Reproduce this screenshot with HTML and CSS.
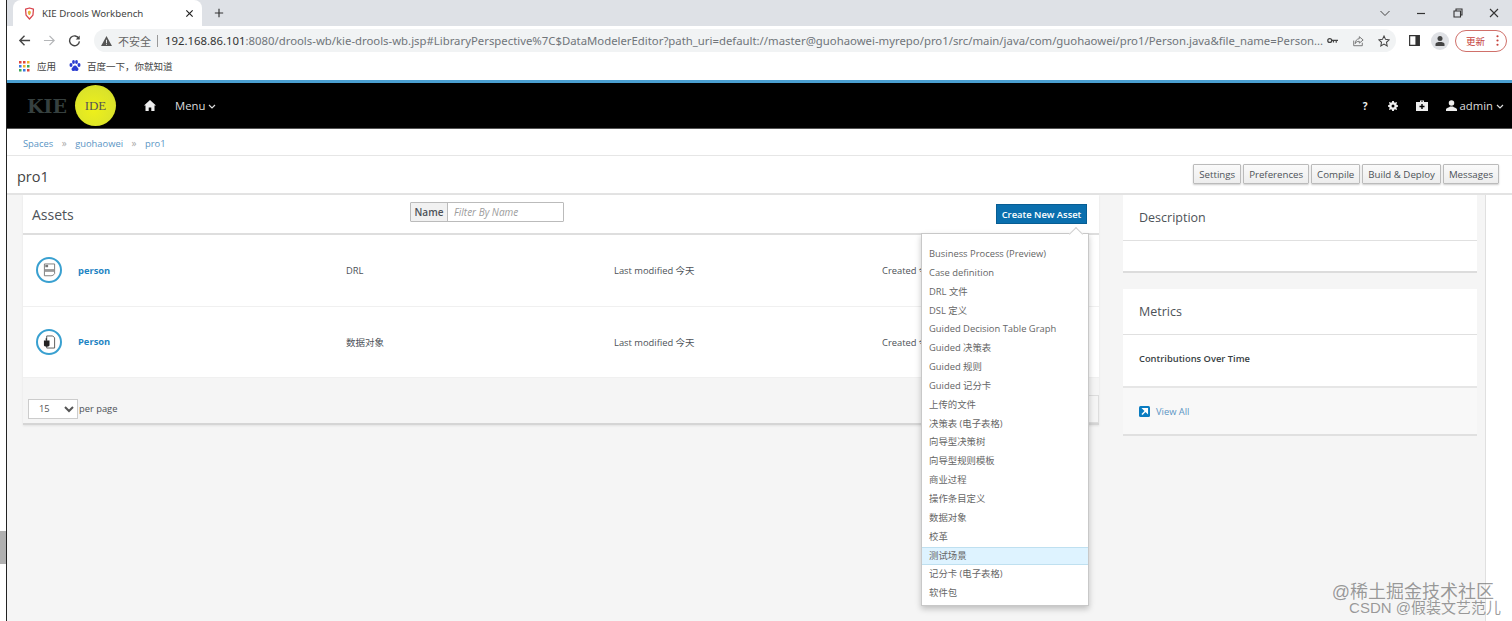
FILE: index.html
```html
<!DOCTYPE html>
<html lang="zh">
<head>
<meta charset="utf-8">
<title>KIE Drools Workbench</title>
<link rel="stylesheet" href="styles.css">
</head>
<body>
<div class="gutter"><div class="gutter-block"></div></div>
<div class="window">
  <div class="tabstrip">
    <div class="tab">
      <svg class="favicon" viewBox="0 0 14 16"><path d="M2 2.500 7 1l5 1.500-.6 7.500L7 15 2.600 10z" fill="#fff" stroke="#d8424a" stroke-width="1.600" stroke-linejoin="round"/><path d="M5.200 5.200c1.400-1.400 3.600-.6 3.600 1.400 0 1.400-1.200 2-1.200 3.400H6c0-1.200-.8-1.800-1.200-2.600z" fill="#e7b53c"/></svg>
      <span class="tab-title">KIE Drools Workbench</span>
      <svg class="tab-close" viewBox="0 0 10 10"><path d="M1.500 1.500l7 7M8.500 1.500l-7 7" stroke="#222" stroke-width="1.300"/></svg>
    </div>
    <svg class="newtab" viewBox="0 0 12 12"><path d="M6 1v10M1 6h10" stroke="#333" stroke-width="1.400"/></svg>
    <div class="winctl">
      <svg class="wc" viewBox="0 0 12 12"><path d="M1.500 4 6 8.500 10.500 4" fill="none" stroke="#444" stroke-width="1"/></svg>
      <svg class="wc" viewBox="0 0 12 12"><path d="M2 6.500h8" stroke="#333" stroke-width="1.200"/></svg>
      <svg class="wc" viewBox="0 0 12 12"><path d="M2 4h6.500v6H2zM4 4V2h6v6H8.500" fill="none" stroke="#333" stroke-width="1.100"/></svg>
      <svg class="wc" viewBox="0 0 12 12"><path d="M2 2l8 8M10 2l-8 8" stroke="#333" stroke-width="1.100"/></svg>
    </div>
  </div>
  <div class="toolbar">
    <svg class="nav-ic" viewBox="0 0 14 14"><path d="M13 7H2M7 2 2 7l5 5" fill="none" stroke="#444" stroke-width="1.500"/></svg>
    <svg class="nav-ic" viewBox="0 0 14 14"><path d="M1 7h11M7 2l5 5-5 5" fill="none" stroke="#b4b6b8" stroke-width="1.300"/></svg>
    <svg class="nav-ic" viewBox="0 0 14 14"><path d="M11.800 5A5.300 5.300 0 1 0 12.300 8" fill="none" stroke="#444" stroke-width="1.500"/><path d="M12.600 1.500v4.300H8.300z" fill="#444"/></svg>
    <div class="omnibox">
      <svg class="warn" viewBox="0 0 12 11"><path d="M6 0 12 11H0z" fill="#555"/><path d="M5.500 4h1v3.800h-1zM5.500 8.500h1v1h-1z" fill="#f1f3f4"/></svg>
      <span class="insecure">不安全</span>
      <span class="url"><b class="host">192.168.86.101</b>:8080/drools-wb/kie-drools-wb.jsp#LibraryPerspective%7C$DataModelerEditor?path_uri=default://master@guohaowei-myrepo/pro1/src/main/java/com/guohaowei/pro1/Person.java&amp;file_name=Person...</span>
      <svg class="omni-ic key" viewBox="0 0 14 8"><circle cx="3.500" cy="4" r="2.500" fill="none" stroke="#444" stroke-width="1.600"/><path d="M6 3h8v1.600h-1.500V7h-1.500V4.600H9V6.500H7.500V4.600H6z" fill="#444"/></svg>
      <svg class="omni-ic share" viewBox="0 0 14 14"><path d="M2 6.500V12.500H12V9" fill="none" stroke="#666" stroke-width="1"/><path d="M8.500 2 13 5.800 8.500 9.500V7.300C6 7.300 4.500 8.500 3.800 10 3.800 6.800 5.500 4.600 8.500 4.300z" fill="none" stroke="#666" stroke-width="1"/></svg>
      <svg class="omni-ic star" viewBox="0 0 14 14"><path d="M7 1.200 8.800 5.100l4.200.5-3.100 2.900.8 4.200L7 10.600 3.300 12.700l.8-4.200L1 5.600l4.200-.5z" fill="none" stroke="#444" stroke-width="1.200"/></svg>
    </div>
    <svg class="panel-ic" viewBox="0 0 12 12"><path d="M.7.700h10.600v10.600H.7z" fill="#fff" stroke="#333" stroke-width="1.300"/><path d="M7 1h4v10H7z" fill="#333"/></svg>
    <div class="avatar"><svg viewBox="0 0 12 12"><circle cx="6" cy="3.500" r="2.500" fill="#444"/><path d="M1.500 11V9C1.500 7.500 4 7 6 7s4.500.5 4.500 2v2z" fill="#444"/></svg></div>
    <div class="update"><span>更新</span><svg viewBox="0 0 3 13"><circle cx="1.500" cy="1.500" r="1.300" fill="#c5403a"/><circle cx="1.500" cy="6.500" r="1.300" fill="#c5403a"/><circle cx="1.500" cy="11.500" r="1.300" fill="#c5403a"/></svg></div>
  </div>
  <div class="bookmarks">
    <svg class="apps" viewBox="0 0 11 11">
      <rect x="0" y="0" width="2.500" height="2.500" fill="#e0463a"/><rect x="4" y="0" width="2.500" height="2.500" fill="#e0463a"/><rect x="8" y="0" width="2.500" height="2.500" fill="#f0b429"/>
      <rect x="0" y="4" width="2.500" height="2.500" fill="#3a78e0"/><rect x="4" y="4" width="2.500" height="2.500" fill="#f0b429"/><rect x="8" y="4" width="2.500" height="2.500" fill="#3ea85a"/>
      <rect x="0" y="8" width="2.500" height="2.500" fill="#3ea85a"/><rect x="4" y="8" width="2.500" height="2.500" fill="#3a78e0"/><rect x="8" y="8" width="2.500" height="2.500" fill="#e0463a"/>
    </svg>
    <span class="bm-text apps-label">应用</span>
    <svg class="paw" viewBox="0 0 12 12"><g fill="#2b3dd0"><ellipse cx="2" cy="5" rx="1.500" ry="1.900"/><ellipse cx="4.500" cy="2" rx="1.400" ry="1.900"/><ellipse cx="7.500" cy="2" rx="1.400" ry="1.900"/><ellipse cx="10" cy="5" rx="1.500" ry="1.900"/><path d="M6 5.500c1.700 0 2 1.500 3 2.500s.5 3.200-1.500 3c-1-.1-2-.4-3 0-2 .2-2.500-2-1.500-3s1.300-2.500 3-2.500z"/></g></svg>
    <span class="bm-text">百度一下，你就知道</span>
  </div>
  <div class="page">
    <header class="navbar">
      <span class="kie">KIE</span>
      <span class="ide">IDE</span>
      <svg class="home" viewBox="0 0 12 11"><path d="M6 0 0 5.500h1.500V11h3.200V7.500h2.600V11h3.200V5.500H12z" fill="#eee"/></svg>
      <span class="menu">Menu</span>
      <svg class="chev" viewBox="0 0 8 5"><path d="M1 1l3 3 3-3" fill="none" stroke="#ddd" stroke-width="1.200"/></svg>
      <div class="nav-right">
        <span class="q">?</span>
        <svg class="gear" viewBox="0 0 12 12"><path d="M5 0h2l.3 1.600 1.200.5L9.900 1.200l1 1-.9 1.400.5 1.200L12 5v2l-1.500.300-.5 1.200.9 1.400-1 1-1.400-.9-1.200.5L7 12H5l-.3-1.500-1.200-.5-1.400.9-1-1 .9-1.400-.5-1.200L0 7V5l1.500-.2.500-1.200-.9-1.400 1-1 1.400.9 1.200-.5z" fill="#eee"/><circle cx="6" cy="6" r="1.800" fill="#000"/></svg>
        <svg class="case" viewBox="0 0 12 11"><path d="M4 2V.500h4V2h4v9H0V2zM5 1.500V2h2v-.5z" fill="#eee" fill-rule="evenodd"/><path d="M5.300 4h1.400v1.800h1.800v1.400H6.700V9H5.300V7.200H3.500V5.800h1.800z" fill="#000"/></svg>
        <svg class="user" viewBox="0 0 12 12"><circle cx="6" cy="3.200" r="3" fill="#eee"/><path d="M0 12v-1.500C0 8.500 3.500 8 4.500 7h3c1 1 4.500 1.500 4.500 3.500V12z" fill="#eee"/></svg>
        <span class="admin">admin</span>
        <svg class="chev chev-r" viewBox="0 0 8 5"><path d="M1 1l3 3 3-3" fill="none" stroke="#ddd" stroke-width="1.200"/></svg>
      </div>
    </header>
    <nav class="crumbs">
      <a>Spaces</a><span class="sep">»</span><a>guohaowei</a><span class="sep">»</span><a>pro1</a>
    </nav>
    <div class="titlebar">
      <h1>pro1</h1>
      <div class="actions">
        <button class="btn">Settings</button>
        <button class="btn">Preferences</button>
        <button class="btn">Compile</button>
        <button class="btn">Build &amp; Deploy</button>
        <button class="btn">Messages</button>
      </div>
    </div>
    <div class="content">
      <main class="assets-col">
        <section class="assets">
          <div class="assets-head">
            <h2 class="assets-title">Assets</h2>
            <div class="filter"><span class="filter-label">Name</span><span class="filter-input">Filter By Name</span></div>
            <button class="create">Create New Asset</button>
          </div>
          <div class="row">
            <span class="round"><svg viewBox="0 0 14 15"><path d="M1.500 1h11v10.500c-1 1.500-2.500 2.200-4 2.200H1.500z" fill="#fff" stroke="#777" stroke-width="1"/><path d="M2.500 2h3v2.500h-3z" fill="#777"/><path d="M2 6.500h10v3H2z" fill="#999"/></svg></span>
            <a class="name">person</a>
            <span>DRL</span>
            <span>Last modified <span class="cjk">今天</span></span>
            <span>Created 今天</span>
          </div>
          <div class="row">
            <span class="round"><svg viewBox="0 0 14 15"><path d="M4 1h6.500l2 2v11H4z" fill="#fff" stroke="#555" stroke-width="1"/><path d="M1 6h6v5c0 1-1 1.500-3 1.500S1 12 1 11z" fill="#222"/><path d="M3.500 3.500v2.500" stroke="#222" stroke-width="1.200"/></svg></span>
            <a class="name">Person</a>
            <span class="cjk">数据对象</span>
            <span>Last modified <span class="cjk">今天</span></span>
            <span>Created 今天</span>
          </div>
          <div class="assets-foot">
            <div class="pager"><select class="perpage"><option>15</option></select><span>per page</span></div>
            <div class="pager-end"></div>
          </div>
        </section>
      </main>
      <aside class="side">
        <section class="side-card">
          <h2 class="side-title">Description</h2>
          <div class="side-empty"></div>
        </section>
        <section class="side-card">
          <h2 class="side-title">Metrics</h2>
          <div class="side-body"><strong>Contributions Over Time</strong></div>
          <div class="side-foot">
            <svg class="viewall" viewBox="0 0 11 11"><rect width="11" height="11" rx="1.500" fill="#0a7cc1"/><path d="M3 8.500 7 4.500M4.300 2.700h4v4z" stroke="#fff" stroke-width="1.500" fill="#fff"/></svg>
            <a class="viewall-link">View All</a>
          </div>
        </section>
      </aside>
      <div class="rail"></div>
      <div class="dropdown">
        <i class="notch"></i>
        <ul>
          <li>Business Process (Preview)</li>
          <li>Case definition</li>
          <li>DRL 文件</li>
          <li>DSL 定义</li>
          <li>Guided Decision Table Graph</li>
          <li>Guided 决策表</li>
          <li>Guided 规则</li>
          <li>Guided 记分卡</li>
          <li>上传的文件</li>
          <li>决策表 (电子表格)</li>
          <li>向导型决策树</li>
          <li>向导型规则模板</li>
          <li>商业过程</li>
          <li>操作条目定义</li>
          <li>数据对象</li>
          <li>校革</li>
          <li class="active">测试场景</li>
          <li>记分卡 (电子表格)</li>
          <li>软件包</li>
        </ul>
      </div>
    </div>
  </div>
  <div class="marks"><div class="mark1">@稀土掘金技术社区</div><div class="mark2">CSDN @假装文艺范儿</div></div>
</div>
</body>
</html>
```
FILE: styles.css
```css
* { box-sizing: border-box; }
html, body { margin: 0; height: 621px; overflow: hidden; }
body { display: flex; background: #fff; font-family: "Open Sans", "Noto Sans CJK SC", sans-serif; font-size: 9.350px; color: #4d5258; }
.gutter { width: 6px; flex: none; padding-top: 531px; }
.gutter-block { height: 33px; background: #b0b0b0; }
.window { flex: 1; min-width: 0; height: 621px; border-left: 1px solid #222; display: flex; flex-direction: column; position: relative; }

.tabstrip { height: 26px; flex: none; background: #dee1e6; display: flex; align-items: center; padding-left: 6px; }
.tab { width: 189px; height: 26px; background: #fff; border-radius: 8px 8px 0 0; display: flex; align-items: center; padding-left: 11px; }
.favicon { width: 11px; height: 13px; margin-right: 7px; }
.tab-title { font-family: "Noto Sans", sans-serif; font-size: 9.700px; color: #444; width: 143px; white-space: nowrap; }
.tab-close { width: 9px; height: 9px; }
.newtab { width: 10px; height: 10px; margin-left: 12px; }
.winctl { margin-left: auto; display: flex; }
.wc { width: 12px; height: 12px; margin-right: 24.300px; }
.wc:last-child { margin-right: 12px; }

.toolbar { height: 29px; flex: none; background: #fff; display: flex; align-items: center; padding-left: 11px; }
.nav-ic { width: 13px; height: 13px; margin-right: 12px; }
.omnibox { width: 1302px; height: 23px; margin-left: 1px; background: #f1f3f4; border-radius: 12px; display: flex; align-items: center; padding-left: 7px; }
.warn { width: 11px; height: 10px; flex: none; margin-right: 6px; }
.insecure { font-family: "Noto Sans CJK SC", sans-serif; font-size: 11px; color: #666; flex: none; padding-right: 6px; border-right: 1px solid #999; line-height: 12px; margin-right: 7px; }
.url { flex: none; width: 1150px; white-space: nowrap; font-family: "Noto Sans", sans-serif; font-size: 11.350px; color: #70757a; }
.host { font-weight: 400; color: #333; }
.omni-ic { flex: none; }
.key { width: 11px; height: 7px; margin-left: 12px; }
.share { width: 12px; height: 12px; margin-left: 14px; }
.star { width: 12px; height: 12px; margin-left: 14px; }
.panel-ic { width: 11px; height: 11px; margin-left: 13px; flex: none; }
.avatar { width: 18px; height: 18px; border-radius: 50%; background: #dfe1e5; margin-left: 11px; padding: 3px; display: flex; flex: none; }
.update { width: 52px; height: 22px; margin-left: 6px; border: 1px solid #d0706a; border-radius: 11px; display: flex; align-items: center; padding-left: 10px; flex: none; color: #c5403a; font-family: "Noto Sans CJK SC", sans-serif; font-size: 9.500px; }
.update svg { width: 3px; height: 11px; margin-left: 11px; }

.bookmarks { height: 25px; flex: none; background: #fff; display: flex; align-items: center; padding: 0 0 3px 12px; }
.apps { width: 11px; height: 11px; margin-right: 7px; }
.bm-text { font-family: "Noto Sans CJK SC", sans-serif; font-size: 9.500px; color: #444; }
.apps-label { margin-right: 13px; }
.paw { width: 12px; height: 12px; margin-right: 6px; }

.page { flex: 1; min-height: 0; border-top: 3px solid #4a9fd0; display: flex; flex-direction: column; }
.navbar { height: 46px; flex: none; background: #000; border-bottom: 1px solid #555; display: flex; align-items: center; padding-left: 20px; color: #ddd; }
.kie { font-family: "DejaVu Serif", serif; font-weight: 700; font-size: 19px; color: #36403f; width: 48px; }
.ide { width: 41px; height: 41px; border-radius: 50%; background: radial-gradient(circle at 45% 60%, #eef01a 0%, #dbe32a 65%, #c4cf1c 100%); font-family: "Liberation Serif", serif; font-size: 13px; color: #555; display: flex; align-items: center; justify-content: center; }
.home { width: 12px; height: 11px; margin-left: 28px; }
.menu { font-size: 11.300px; margin-left: 19px; }
.chev { width: 8px; height: 5px; margin-left: 3px; margin-top: 2px; }
.nav-right { margin-left: auto; display: flex; align-items: center; padding-right: 8px; }
.q { font-weight: 700; font-size: 10px; color: #eee; margin-right: 20px; }
.gear { width: 10px; height: 10px; margin-right: 18px; }
.case { width: 12px; height: 11px; margin-right: 18px; }
.user { width: 11px; height: 11px; margin-right: 3px; }
.admin { font-size: 11.300px; }
.chev-r { margin-left: 3px; }

.crumbs { height: 27px; flex: none; background: #fff; border-bottom: 1px solid #e6e6e6; display: flex; align-items: center; padding: 2px 0 0 16px; color: #5b95c4; }
.sep { color: #aaa; margin: 0 8.500px; font-size: 10px; }
.titlebar { height: 39px; flex: none; background: #fff; border-bottom: 2px solid #e3e3e3; display: flex; align-items: center; padding-left: 10px; }
h1 { margin: 4px 0 0; font-weight: 400; font-size: 14.500px; color: #444; }
.actions { margin-left: auto; display: flex; gap: 2px; padding-right: 13px; margin-top: -1px; }
.btn { height: 20px; padding: 0 5px; font: 9.700px "Open Sans", sans-serif; color: #4d5258; background: linear-gradient(#fafafa, #ededed); border: 1px solid #bbb; border-radius: 1px; box-shadow: 0 1px 2px rgba(0,0,0,.2); }

.content { flex: 1; min-height: 0; background: #f5f5f5; display: flex; position: relative; padding-left: 16px; }
.assets-col { width: 1076px; flex: none; }
.assets { background: #f5f5f5; border-bottom: 2px solid #d5d5d5; box-shadow: 0 1px 2px rgba(0,0,0,.08); }
.assets-head { height: 40px; background: #fff; border-bottom: 2px solid #dedede; display: flex; align-items: center; padding: 0 12px 0 9px; position: relative; }
.assets-title { margin: 0; font-weight: 400; font-size: 14px; color: #4d5258; width: 378px; }
.filter { width: 154px; height: 20px; margin-top: -5px; border: 1px solid #bbb; border-radius: 1px; display: flex; background: #fff; }
.filter-label { width: 37px; background: #f1f1f1; border-right: 1px solid #bbb; font-size: 10px; font-weight: 600; color: #4d5258; display: flex; align-items: center; justify-content: center; }
.filter-input { font-style: italic; font-size: 10px; color: #9c9c9c; padding-left: 6px; display: flex; align-items: center; }
.create { margin-left: auto; height: 20px; width: 91px; padding: 0; background: #0a6fae; color: #fff; border: 1px solid #075d93; font: 600 9.400px "Open Sans", sans-serif; }
.row { height: 71.500px; background: #fff; border-bottom: 1px solid #f0f0f0; display: grid; grid-template-columns: 42px 268px 268px 268px 1fr; align-items: center; padding-left: 13px; white-space: nowrap; overflow: hidden; }
.cjk { font-family: "Noto Sans CJK SC", sans-serif; font-size: 9.500px; }
.round { width: 26px; height: 26px; border: 2px solid #39a0d0; border-radius: 50%; background: #fff; display: flex; align-items: center; justify-content: center; }
.round svg { width: 13px; height: 14px; }
.name { font-weight: 700; color: #1f85c4; }
.assets-foot { height: 45px; display: flex; align-items: center; padding: 16px 0 0 5px; }
.pager { display: flex; align-items: center; }
.perpage { width: 50px; height: 20px; margin-right: 1px; border: 1px solid #ccc; background: #fff; font: 9.350px "Open Sans", sans-serif; color: #555; padding-left: 6px; }
.pager-end { margin-left: auto; width: 10px; height: 28px; background: #f5f5f5; border: 1px solid #ddd; border-left: 0; }

.side { width: 354px; flex: none; margin-left: 24px; display: flex; flex-direction: column; gap: 16px; }
.side-card { background: #fff; }
.side-title { margin: 0; height: 46px; padding-left: 16px; display: flex; align-items: center; font-weight: 400; font-size: 12.500px; color: #4d5258; border-bottom: 1px solid #e0e0e0; }
.side-empty { height: 32px; border-bottom: 2px solid #dcdcdc; }
.side-body { height: 53px; padding: 17px 16px 0; border-bottom: 2px solid #e6e6e6; }
.side-body strong { font-weight: 600; color: #393f44; }
.side-foot { height: 48px; background: #f8f8f8; border-bottom: 2px solid #e0e0e0; display: flex; align-items: center; padding-left: 16px; }
.viewall { width: 11px; height: 11px; margin-right: 6px; }
.viewall-link { color: #5b95c4; }
.rail { margin-left: 8px; flex: 1; background: #fff; border-left: 1px solid #e0e0e0; }

.dropdown { position: absolute; left: 914px; top: 38px; width: 168px; height: 373px; background: #fff; border: 1px solid #c8c8c8; box-shadow: 0 3px 6px rgba(0,0,0,.22); padding-top: 11px; }
.notch { position: absolute; right: 7px; top: -5px; width: 10px; height: 10px; background: #fff; border: 1px solid #d0d0d0; border-right: 0; border-bottom: 0; transform: rotate(45deg); }
.dropdown ul { list-style: none; margin: 0; padding: 0; }
.dropdown li { height: 18.850px; line-height: 18.850px; padding-left: 7px; font-size: 9.400px; color: #666; white-space: nowrap; }
.dropdown li.active { background: #def3ff; border-top: 1px solid #bfe0f0; border-bottom: 1px solid #bfe0f0; line-height: 16.850px; }

.marks { position: absolute; right: 11px; bottom: 6px; color: rgba(90,90,90,.6); font-family: "Liberation Sans", "Noto Sans CJK SC", sans-serif; text-align: right; line-height: 15px; }
.mark1 { font-size: 18px; padding-right: 7px; line-height: 16px; }
.mark2 { font-size: 15px; }
```
